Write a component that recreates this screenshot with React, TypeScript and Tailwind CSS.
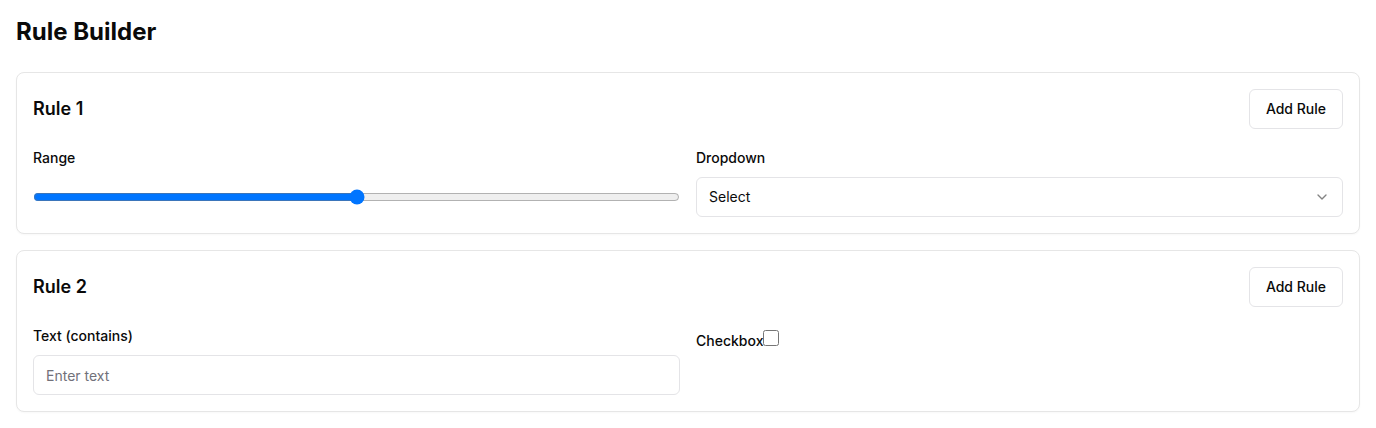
import React, { useState } from 'react';
import { ChevronDown } from 'lucide-react';

interface RuleCardProps {
  title: string;
  children: React.ReactNode;
}

/**
 * Card wrapper for a single rule with its header row
 */
const RuleCard: React.FC<RuleCardProps> = ({ title, children }) => (
  <section className="rounded-lg border border-[#e6e6e6] bg-white p-4 shadow-[0_1px_2px_rgba(0,0,0,0.03)]">
    <div className="mb-[19px] flex items-center justify-between">
      <h2 className="text-lg font-semibold text-[#0a0a0a]">{title}</h2>
      <button
        type="button"
        className="h-10 rounded-md border border-[#e4e4e7] bg-white px-4 text-sm font-medium text-[#0a0a0a]"
      >
        Add Rule
      </button>
    </div>
    <div className="grid grid-cols-2 gap-4">{children}</div>
  </section>
);

export default function App() {
  const [range, setRange] = useState(50);
  const [text, setText] = useState('');
  const [checked, setChecked] = useState(false);

  return (
    <div className="min-h-screen bg-white p-4 font-['Inter','Liberation_Sans',sans-serif] text-[#0a0a0a]">
      <h1 className="mb-6 text-2xl font-bold">Rule Builder</h1>

      <div className="space-y-4">
        {/* Rule 1 */}
        <RuleCard title="Rule 1">
          <div>
            <label className="mb-[9px] block text-sm font-medium leading-5">Range</label>
            <input
              type="range"
              min={0}
              max={100}
              value={range}
              onChange={(e) => setRange(Number(e.target.value))}
              className="block h-10 w-full"
            />
          </div>
          <div>
            <label className="mb-[9px] block text-sm font-medium leading-5">Dropdown</label>
            <button
              type="button"
              className="flex h-10 w-full items-center justify-between rounded-md border border-[#e4e4e7] bg-white px-3 text-sm"
            >
              <span>Select</span>
              <ChevronDown className="h-4 w-4 opacity-50" />
            </button>
          </div>
        </RuleCard>

        {/* Rule 2 */}
        <RuleCard title="Rule 2">
          <div>
            <label className="mb-[9px] block text-sm font-medium leading-5">Text (contains)</label>
            <input
              type="text"
              placeholder="Enter text"
              value={text}
              onChange={(e) => setText(e.target.value)}
              className="h-10 w-full rounded-md border border-[#e4e4e7] bg-white px-3 text-sm placeholder:text-[#71717a] focus:outline-none"
            />
          </div>
          <div>
            <label className="mt-1 block text-sm font-medium leading-5">
              Checkbox
              <input
                type="checkbox"
                checked={checked}
                onChange={(e) => setChecked(e.target.checked)}
                className="h-4 w-4"
              />
            </label>
          </div>
        </RuleCard>
      </div>
    </div>
  );
}
